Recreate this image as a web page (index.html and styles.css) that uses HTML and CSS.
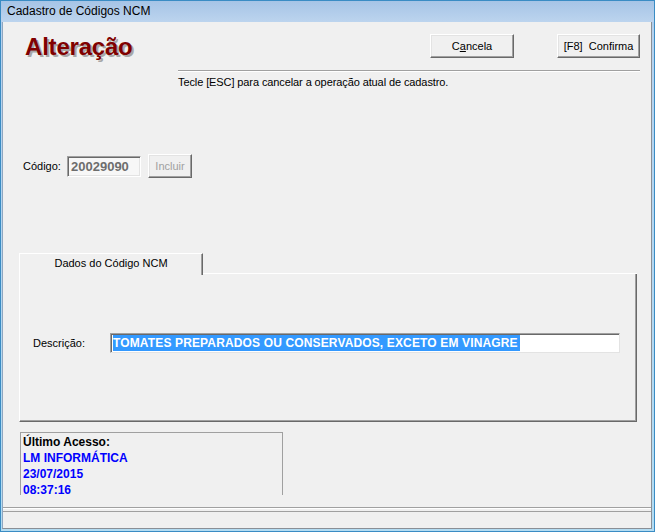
FILE: index.html
```html
<!DOCTYPE html>
<html lang="pt">
<head>
<meta charset="utf-8">
<title>Cadastro de Códigos NCM</title>
<link rel="stylesheet" href="styles.css">
</head>
<body>
<div class="window">
  <div class="titlebar">Cadastro de Códigos NCM</div>
  <div class="client">
    <div class="header">
      <div class="title">Alteração</div>
      <div class="header-right">
        <div class="btn-row">
          <button class="btn btn-cancel">C<u>a</u>ncela</button>
          <button class="btn btn-confirm">[F8]&nbsp;&nbsp;Confirma</button>
        </div>
        <div class="etched"></div>
        <div class="hint">Tecle [ESC] para cancelar a operação atual de cadastro.</div>
      </div>
    </div>

    <div class="code-row">
      <span class="label code-label">Código:</span>
      <div class="field code-field">20029090</div>
      <button class="btn btn-disabled">Incluir</button>
    </div>

    <div class="tabs">
      <div class="tab">Dados do Código NCM</div>
      <div class="tab-fill"></div>
    </div>
    <div class="panel">
      <div class="desc-row">
        <span class="label desc-label">Descrição:</span>
        <div class="field desc-field"><span class="sel">TOMATES PREPARADOS OU CONSERVADOS, EXCETO EM VINAGRE</span></div>
      </div>
    </div>

    <div class="access">
      <div class="access-title">Último Acesso:</div>
      <div class="access-val">LM INFORMÁTICA</div>
      <div class="access-val">23/07/2015</div>
      <div class="access-val">08:37:16</div>
    </div>

    <div class="footer">
      <div class="etched wide"></div>
      <div class="statusbar"></div>
    </div>
  </div>
</div>
</body>
</html>
```

FILE: styles.css
```css
* { box-sizing: border-box; }
html, body { margin: 0; padding: 0; }
body {
  width: 655px;
  height: 532px;
  overflow: hidden;
  font-family: "Liberation Sans", Arial, sans-serif;
  font-size: 11px;
  color: #000;
  background: #fff;
}
.window {
  width: 655px;
  height: 532px;
  border: 1px solid #3a8cc4;
  background: linear-gradient(#9fc0e4, #b6d2ee 30px, #b3dcf2);
  display: flex;
  flex-direction: column;
}
.titlebar {
  height: 21px;
  flex: none;
  padding-left: 6px;
  font-size: 12px;
  line-height: 20px;
  color: #000;
  background: linear-gradient(#a6c4e6, #bcd4ee);
}
.client {
  flex: 1;
  margin: 0 2px 2px 1px;
  border-left: 1px solid #8ea6c0;
  border-right: 1px solid #8a8f96;
  border-bottom: 1px solid #8a8f96;
  background: #f0f0f0;
  display: flex;
  flex-direction: column;
}
.header {
  display: flex;
  padding: 12px 11px 0 22px;
}
.title {
  width: 153px;
  margin-top: 1px;
  font-size: 24px;
  line-height: 24px;
  font-weight: bold;
  color: #800000;
  letter-spacing: -0.2px;
  text-shadow: 2px 2px 0 #a8a8a8;
}
.header-right {
  flex: 1;
  display: flex;
  flex-direction: column;
}
.btn-row {
  display: flex;
  justify-content: flex-end;
  gap: 43px;
  margin-bottom: 12px;
}
.btn {
  height: 24px;
  padding: 0;
  font-family: "Liberation Sans", Arial, sans-serif;
  font-size: 11px;
  color: #000;
  background: #f0f0f0;
  border: 1px solid;
  border-color: #fff #696969 #696969 #fff;
  box-shadow: inset -1px -1px #a0a0a0, inset 1px 1px #e3e3e3;
}
.btn-cancel { width: 84px; }
.btn-confirm { width: 83px; }
.btn-disabled { width: 44px; color: #a0a0a0; }
.etched {
  height: 2px;
  border-top: 1px solid #a0a0a0;
  border-bottom: 1px solid #fff;
}
.hint {
  margin-top: 4px;
  line-height: 13px;
  letter-spacing: -0.1px;
}
.label { line-height: 13px; }
.code-row {
  margin-top: 65px;
  padding-left: 20px;
  display: flex;
  align-items: center;
  height: 24px;
}
.code-label { width: 44px; }
.field {
  border: 1px solid;
  border-color: #a0a0a0 #fff #fff #a0a0a0;
  box-shadow: inset 1px 1px #696969, inset -1px -1px #e3e3e3;
}
.code-field {
  width: 74px;
  height: 21px;
  margin-right: 7px;
  padding: 2px 0 0 3px;
  font-size: 13px;
  line-height: 16px;
  font-weight: bold;
  color: #6d6d6d;
  background: #f7f7f7;
}
.tabs {
  margin-top: 75px;
  margin-left: 16px;
  margin-right: 14px;
  display: flex;
  height: 21px;
}
.tab {
  width: 184px;
  height: 22px;
  border-top: 1px solid #fff;
  border-left: 1px solid #fff;
  border-right: 1px solid #696969;
  box-shadow: inset -1px 0 #a0a0a0;
  background: #f0f0f0;
  text-align: center;
  line-height: 18px;
  position: relative;
  z-index: 1;
}
.tab-fill {
  flex: 1;
  border-bottom: 1px solid #fff;
}
.panel {
  margin-left: 16px;
  margin-right: 14px;
  height: 148px;
  border-left: 1px solid #fff;
  border-right: 1px solid #696969;
  border-bottom: 1px solid #696969;
  box-shadow: inset -1px -1px #a0a0a0;
  padding-top: 59px;
}
.desc-row {
  display: flex;
  align-items: center;
  padding-left: 13px;
}
.desc-label { width: 77px; }
.desc-field {
  width: 510px;
  height: 20px;
  padding: 1px 0 0 2px;
  background: #fff;
  border-color: #a0a0a0 #e3e3e3 #e3e3e3 #a0a0a0;
  box-shadow: inset 1px 1px #696969;
}
.sel {
  display: inline-block;
  height: 16px;
  line-height: 16px;
  font-size: 12px;
  font-weight: bold;
  letter-spacing: 0.14px;
  color: #fff;
  background: #3399ff;
  padding-right: 2px;
  white-space: nowrap;
}
.access {
  margin-top: 10px;
  margin-left: 17px;
  width: 263px;
  height: 63px;
  border: 1px solid #a0a0a0;
  border-bottom: none;
  padding: 1px 0 0 2px;
  font-size: 12px;
  line-height: 16px;
  font-weight: bold;
}
.access-val { color: #0000ff; }
.footer {
  margin-top: auto;
}
.wide { height: 2px; }
.statusbar {
  margin-top: 2px;
  height: 17px;
  border-top: 1px solid #a0a0a0;
}
```
